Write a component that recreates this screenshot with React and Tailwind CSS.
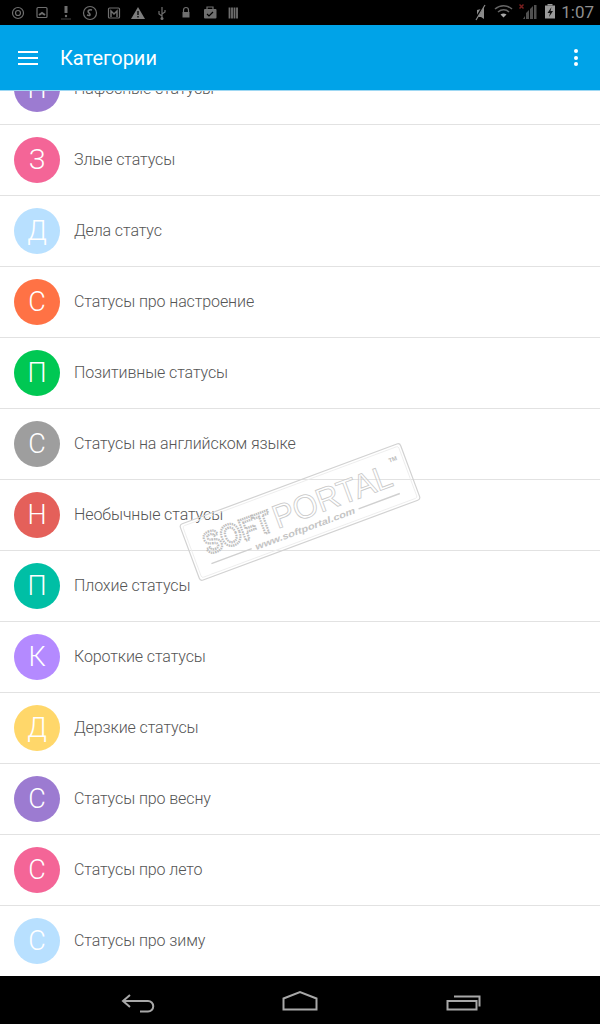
import React from 'react';

const categories = [
  { letter: 'Н', title: 'Нафосные статусы', color: 'bg-[#9c7bd1]' },
  { letter: 'З', title: 'Злые статусы', color: 'bg-[#f46597]' },
  { letter: 'Д', title: 'Дела статус', color: 'bg-[#b8e0ff]' },
  { letter: 'С', title: 'Статусы про настроение', color: 'bg-[#ff7245]' },
  { letter: 'П', title: 'Позитивные статусы', color: 'bg-[#00c853]' },
  { letter: 'С', title: 'Статусы на английском языке', color: 'bg-[#9e9e9e]' },
  { letter: 'Н', title: 'Необычные статусы', color: 'bg-[#e4605a]' },
  { letter: 'П', title: 'Плохие статусы', color: 'bg-[#00bfa5]' },
  { letter: 'К', title: 'Короткие статусы', color: 'bg-[#b48aff]' },
  { letter: 'Д', title: 'Дерзкие статусы', color: 'bg-[#ffd76a]' },
  { letter: 'С', title: 'Статусы про весну', color: 'bg-[#9c7bd1]' },
  { letter: 'С', title: 'Статусы про лето', color: 'bg-[#f46597]' },
  { letter: 'С', title: 'Статусы про зиму', color: 'bg-[#b8e0ff]' },
];

function StatusLeft() {
  return (
    <svg width="250" height="25" viewBox="0 0 250 25" fill="none" stroke="#6f6f6f" strokeWidth="1.2">
      <circle cx="18" cy="13" r="5.5" />
      <circle cx="18" cy="13" r="2.5" />
      <rect x="37" y="7.5" width="10" height="10" rx="1" />
      <path d="M39 15l3-2 3 2" strokeWidth="2" />
      <path d="M66 6v7" strokeWidth="3" />
      <path d="M61 19h10" strokeWidth="1" stroke="#444" />
      <circle cx="66" cy="16" r="1.2" fill="#6f6f6f" stroke="none" />
      <circle cx="90" cy="13" r="6.5" />
      <path d="M92 10c-3-1-5 1-3 3s1 3-2 2" strokeWidth="1.6" />
      <rect x="108.5" y="8" width="11" height="10" rx="1" />
      <path d="M111 17v-6l3 3 3-3v6" strokeWidth="1.5" />
      <path d="M138 7l7 12h-14z" fill="#7d7d7d" stroke="none" />
      <path d="M138 11v4M138 16v1.5" stroke="#000" strokeWidth="1.3" />
      <path d="M162 7v12M162 16l-3-2v-3M162 14l3-2v-2" />
      <circle cx="162" cy="18.5" r="1.5" fill="#6f6f6f" stroke="none" />
      <path d="M183.5 12v-2a2.5 2.5 0 0 1 5 0v2" />
      <rect x="182.5" y="12" width="7" height="5.5" fill="#6f6f6f" stroke="none" />
      <path d="M207 9v-2h6v2" />
      <rect x="204" y="9" width="12.5" height="9.5" rx="1" fill="#6f6f6f" stroke="none" />
      <path d="M207 14l2 2 4-4" stroke="#000" />
      <path d="M229.5 7.5v11M232 7.5v11M234.5 7.5v11M237 7.5v11" strokeWidth="1.8" />
    </svg>
  );
}

function StatusRight() {
  return (
    <div className="flex items-center">
      <svg width="120" height="25" viewBox="0 0 120 25" fill="none">
        {/* mute */}
        <path d="M41 9l4-1 3-3v13l-3-2h-4z" fill="#8a8a8a" transform="translate(-1 1)" />
        <path d="M38 20l9-15" stroke="#000" strokeWidth="2" />
        <path d="M39 20l9-15" stroke="#8a8a8a" strokeWidth="1.2" />
        {/* wifi */}
        <path d="M58 9c5-4.5 12-4.5 17 0" stroke="#666" strokeWidth="1.5" />
        <path d="M61 12c3.5-3 8-3 11 0" stroke="#666" strokeWidth="1.5" />
        <path d="M63.5 14.500c2-1.5 4-1.5 6 0l-3 3z" fill="#aaa" />
        {/* signal */}
        <path d="M88 19h-2l2-3zM92 19h-3v-6l3-3zM96 19h-3V9l3-3zM99.500 19H97V5h2.500z" fill="#505050" />
        <path d="M82.500 4.500l4 4M86.500 4.500l-4 4" stroke="#7a1f1f" strokeWidth="1.5" />
        {/* battery */}
        <rect x="108" y="5.500" width="10" height="13" fill="#9a9a9a" />
        <rect x="110.500" y="4" width="5" height="1.500" fill="#9a9a9a" />
        <path d="M114.500 7l-4 6h2.500l-1 4 4-6h-2.500z" fill="#111" />
      </svg>
      <span className="ml-[4px] text-[17px] text-[#8f8f8f] leading-none mr-[6px]">1:07</span>
    </div>
  );
}

function Watermark() {
  return (
    <svg className="absolute left-[170px] top-[435px]" width="260" height="155" viewBox="-130 -77 260 155" fill="none">
      <g transform="rotate(-20.4)" fontFamily="'Liberation Sans', sans-serif">
        <rect x="-117.5" y="-30" width="235" height="60" rx="3" stroke="#d2d2d2" strokeWidth="1.2" />
        <rect x="-115" y="-27.5" width="230" height="55" rx="2" stroke="#ececec" strokeWidth="0.8" />
        <text x="-101" y="8" fontSize="31" fontWeight="700" textLength="71" lengthAdjust="spacingAndGlyphs" stroke="#bdbdbd" strokeWidth="2.4" strokeDasharray="1.5 1">SOFT</text>
        <text x="-27" y="8" fontSize="33" textLength="125" lengthAdjust="spacingAndGlyphs" stroke="#c8c8c8" strokeWidth="0.8" fill="#ffffff" fillOpacity="0.5">PORTAL</text>
        <text x="101" y="-15" fontSize="6" fontWeight="700" fill="#bbbbbb">TM</text>
        <text x="-54" y="20.5" fontSize="9" fontStyle="italic" fontWeight="700" textLength="106" lengthAdjust="spacingAndGlyphs" fill="#c4c4c4">www.softportal.com</text>
        <path d="M-101 17.5h43M56 17.5h44" stroke="#d0d0d0" strokeWidth="1.5" />
      </g>
    </svg>
  );
}

export default function App() {
  return (
    <div className="relative h-[1024px] w-[600px] flex flex-col overflow-hidden bg-white font-['Roboto',sans-serif]">
      <div className="h-[25px] shrink-0 bg-black flex items-center justify-between">
        <StatusLeft />
        <StatusRight />
      </div>

      <header className="relative z-10 h-[66px] shrink-0 bg-[#00a3e8] border-b border-b-[#9fd8f3] flex items-center pl-[18px] pr-[22px] text-white">
        <div className="w-[20px] flex flex-col gap-[4px]">
          <span className="h-[2px] bg-white" />
          <span className="h-[2px] bg-white" />
          <span className="h-[2px] bg-white" />
        </div>
        <h1 className="ml-[22px] flex-1 text-[20px]">Категории</h1>
        <div className="flex flex-col gap-[2.5px]">
          <span className="w-[4px] h-[4px] rounded-full bg-white" />
          <span className="w-[4px] h-[4px] rounded-full bg-white" />
          <span className="w-[4px] h-[4px] rounded-full bg-white" />
        </div>
      </header>

      <main className="flex-1 overflow-hidden">
        <ul className="-mt-[37px]">
          {categories.map((c, i) => (
            <li key={i} className="h-[71px] flex items-center pl-[14px] border-b border-b-[#e2e2e2]">
              <div className={`w-[46px] h-[46px] rounded-full shrink-0 flex items-center justify-center text-white text-[27px] font-light ${c.color}`}>
                {c.letter}
              </div>
              <span className="ml-[14px] text-[16px] font-light tracking-[-0.1px] text-[#555555]">{c.title}</span>
            </li>
          ))}
        </ul>
      </main>

      <nav className="h-[48px] shrink-0 bg-black">
        <svg width="600" height="48" viewBox="0 0 600 48" fill="none" stroke="#a8a8a8" strokeWidth="2">
          <path d="M130 19l-7 6 7 6" />
          <path d="M123 25h25a5 5 0 0 1 0 10.5h-8" />
          <path d="M283.5 33.5v-11l16.5-6.5 16.5 6.5v11z" />
          <path d="M447.5 25h29v8.5h-29z" />
          <path d="M454 20.5h25.5v10" />
        </svg>
      </nav>

      <Watermark />
    </div>
  );
}
